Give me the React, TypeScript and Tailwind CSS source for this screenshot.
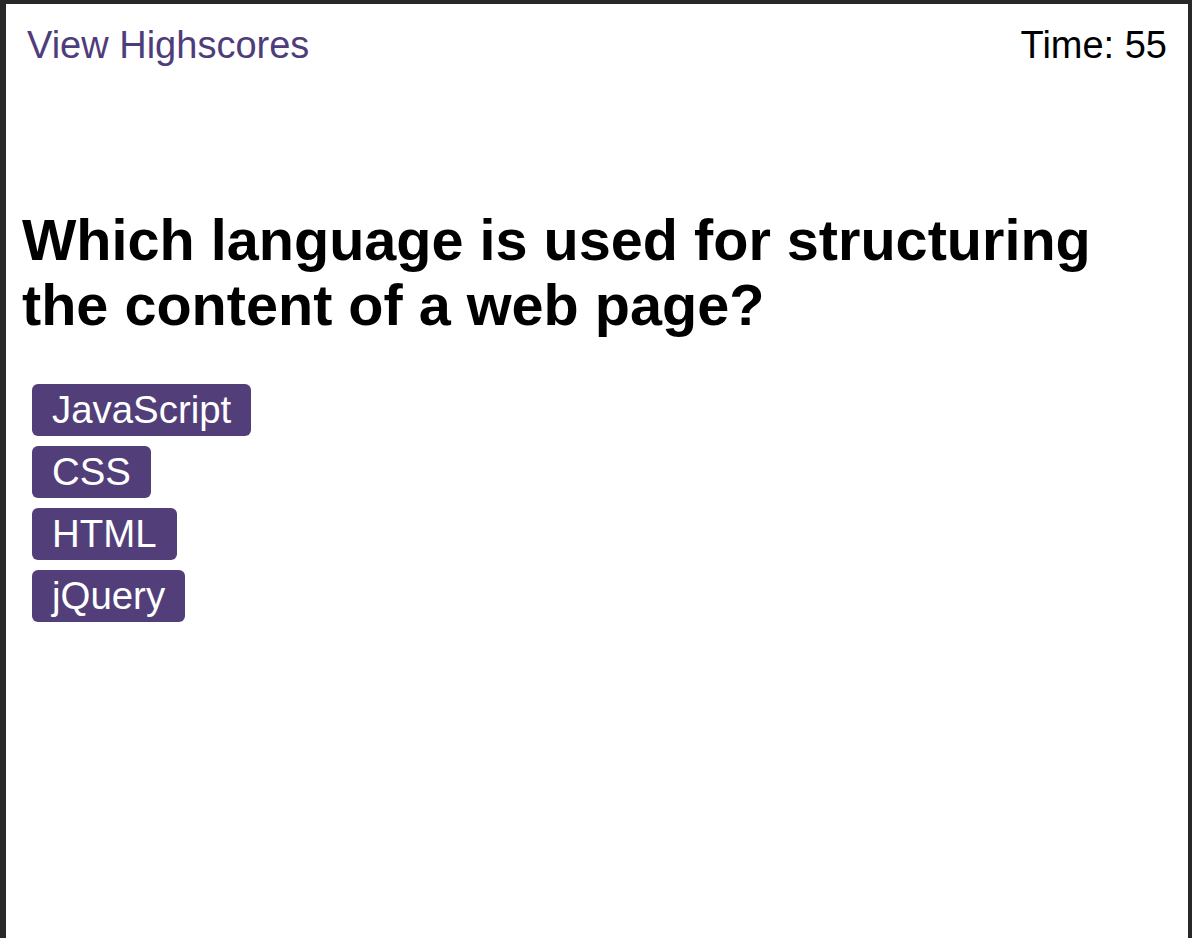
import React from "react";

const choices = ["JavaScript", "CSS", "HTML", "jQuery"];

export default function App() {
  return (
    <div
      className="h-screen bg-white border-l-[6px] border-t-4 border-r-4 border-[#282828] text-black"
      style={{ fontFamily: '"Liberation Sans", Arial, sans-serif' }}
    >
      {/* Header */}
      <header className="flex justify-between items-start px-[21px] pt-[13px]">
        <a href="#" className="text-[38px] text-[#4f3d7a]">
          View Highscores
        </a>
        <p className="text-[38px]">Time: 55</p>
      </header>

      {/* Question */}
      <main className="pl-4 mt-[134px]">
        <h1 className="text-[57.6px] font-bold leading-[65px] pr-8">
          Which language is used for structuring the content of a web page?
        </h1>

        <div className="flex flex-col items-start gap-[10px] mt-[46px] ml-[10px]">
          {choices.map((choice) => (
            <button
              key={choice}
              className="bg-[#523f7a] text-white text-[38.4px] leading-[44px] px-5 py-1 rounded-md"
            >
              {choice}
            </button>
          ))}
        </div>
      </main>
    </div>
  );
}
